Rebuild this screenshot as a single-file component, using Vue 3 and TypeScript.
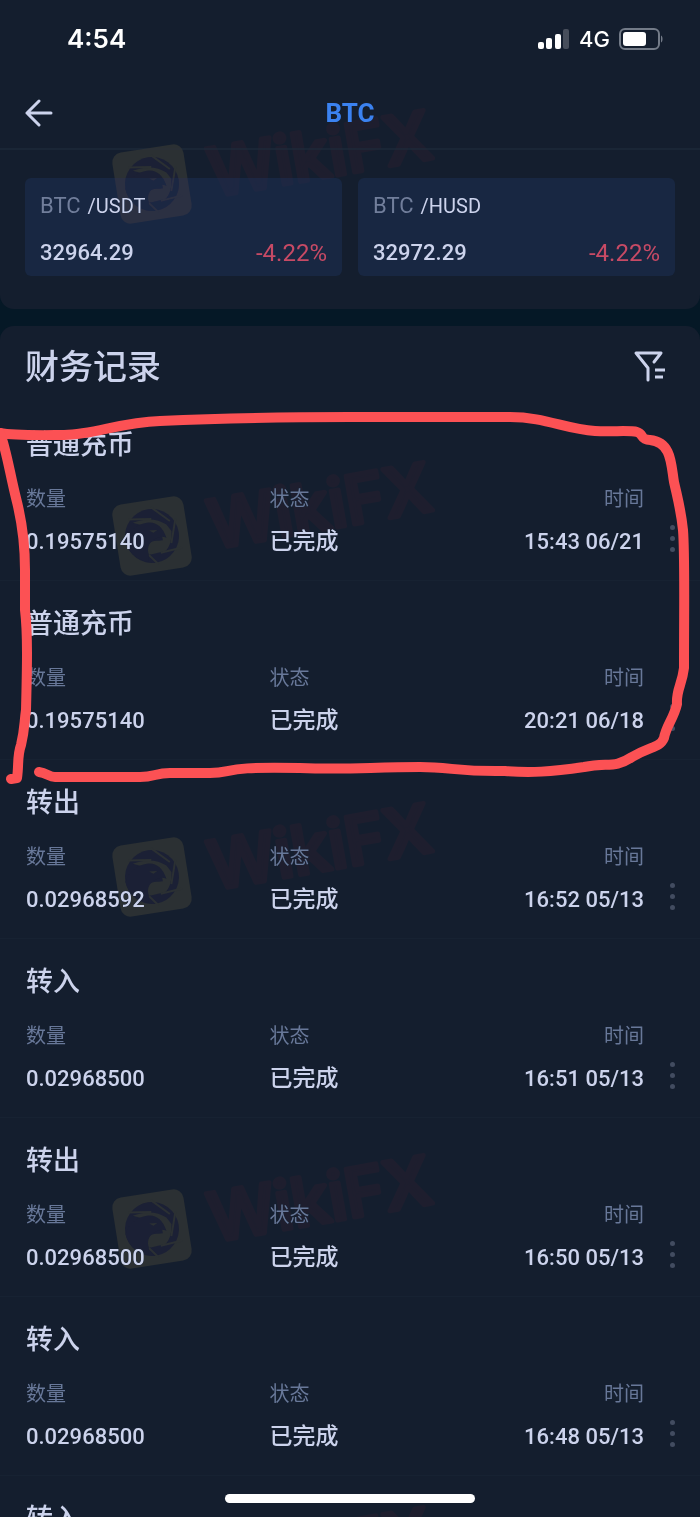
<script setup lang="ts">
interface Pair {
  base: string
  quote: string
  price: string
  change: string
}

interface FinanceRecord {
  id: number
  type: string
  amount: string
  status: string
  time: string
}

const pairs: Pair[] = [
  { base: 'BTC', quote: '/USDT', price: '32964.29', change: '-4.22%' },
  { base: 'BTC', quote: '/HUSD', price: '32972.29', change: '-4.22%' },
]

const records: FinanceRecord[] = [
  { id: 1, type: '普通充币', amount: '0.19575140', status: '已完成', time: '15:43 06/21' },
  { id: 2, type: '普通充币', amount: '0.19575140', status: '已完成', time: '20:21 06/18' },
  { id: 3, type: '转出', amount: '0.02968592', status: '已完成', time: '16:52 05/13' },
  { id: 4, type: '转入', amount: '0.02968500', status: '已完成', time: '16:51 05/13' },
  { id: 5, type: '转出', amount: '0.02968500', status: '已完成', time: '16:50 05/13' },
  { id: 6, type: '转入', amount: '0.02968500', status: '已完成', time: '16:48 05/13' },
]

const nextType = '转入'

// Vertical centres of the repeated brand mark
const marks: number[] = [184, 536, 877, 1229, 1581]
</script>

<template>
  <div class="screen">
    <section class="panel top-panel">
      <div class="status-bar">
        <span class="clock">4:54</span>
        <div class="indicators">
          <svg class="signal" width="32" height="20" viewBox="0 0 32 20" aria-hidden="true">
            <rect x="0" y="13" width="6" height="7" rx="2" fill="#fff" />
            <rect x="8" y="9" width="6" height="11" rx="2" fill="#fff" />
            <rect x="17" y="5" width="6" height="15" rx="2" fill="#fff" />
            <rect x="25" y="0" width="6" height="20" rx="2" fill="#474e5b" />
          </svg>
          <span class="network">4G</span>
          <svg class="battery" width="45" height="22" viewBox="0 0 45 22" aria-hidden="true">
            <rect x="1" y="1" width="39" height="20" rx="5" fill="none" stroke="#737b88" stroke-width="2" />
            <rect x="4" y="4" width="23" height="14" rx="3" fill="#fff" />
            <path d="M42 7.500c2 .8 2 6.200 0 7z" fill="#737b88" />
          </svg>
        </div>
      </div>

      <header class="nav">
        <button class="icon-button" type="button" aria-label="返回">
          <svg width="28" height="28" viewBox="0 0 28 28" fill="none" stroke="currentColor" stroke-width="3" stroke-linecap="round" stroke-linejoin="round">
            <path d="M14 2 2 14l12 12M2 14h24" />
          </svg>
        </button>
        <h1 class="coin">BTC</h1>
        <span></span>
      </header>

      <div class="pairs">
        <a v-for="pair in pairs" :key="pair.quote" class="pair" href="#">
          <span class="pair-name"><span class="base">{{ pair.base }}</span><span class="quote">{{ pair.quote }}</span></span>
          <span class="pair-price"><span>{{ pair.price }}</span><span class="change">{{ pair.change }}</span></span>
        </a>
      </div>
    </section>

    <section class="panel list-panel">
      <div class="list-head">
        <h2>财务记录</h2>
        <button class="icon-button" type="button" aria-label="筛选">
          <svg width="32" height="32" viewBox="0 0 32 32" fill="none" stroke="currentColor" stroke-width="3" stroke-linejoin="round">
            <path d="M20 11 27 2H2l12 15v12" stroke-linecap="round" />
            <path d="M21 19h10M21 26h8" />
          </svg>
        </button>
      </div>

      <article v-for="record in records" :key="record.id" class="record">
        <h3>{{ record.type }}</h3>
        <div class="record-body">
          <dl>
            <div><dt>数量</dt><dd>{{ record.amount }}</dd></div>
            <div><dt>状态</dt><dd class="status">{{ record.status }}</dd></div>
            <div class="time"><dt>时间</dt><dd>{{ record.time }}</dd></div>
          </dl>
          <button class="more" type="button" aria-label="更多"><i></i><i></i><i></i></button>
        </div>
      </article>
      <article class="record"><h3>{{ nextType }}</h3></article>
    </section>

    <svg class="overlay marks" viewBox="0 0 700 1517" preserveAspectRatio="xMinYMin slice" aria-hidden="true">
      <g v-for="y in marks" :key="y" :transform="`translate(152 ${y}) rotate(-9)`">
        <rect class="badge" x="-36" y="-36" width="72" height="72" rx="10" />
        <circle class="lens" r="27" />
        <path class="aperture" d="M-17-16C-5-19 8-17 16-9L20-2C19 6 17 12 11 17L-4 18C-10 17-9 10-6 8-2 4 5 6 10 6L10-4z" />
        <path class="blades" d="M-21-20 2-17M3-29 20-12M26-14 18 10M28 16 6 18M2 29-7 17" />
        <path class="eagle" d="M-27 1C-22-10-12-14-3-14 6-14 12-8 14 4 10 1 5 2 1 4-5 7-7 12-6 18L-8 25C-20 20-26 12-27 1z" />
        <path class="eye" d="M-2-6 6-5 2-3z" />
      </g>
      <text v-for="y in marks" :key="`t${y}`" class="brand" :transform="`translate(213 ${y + 13}) rotate(-10)`">WikiFX</text>
    </svg>

    <svg class="overlay scribble" viewBox="0 0 700 1517" preserveAspectRatio="xMinYMin slice" aria-hidden="true">
      <path d="M0 433C14 436 50 435 64 435 95 435 120 422 160 421 225 418 300 417 350 417H510C545 417 565 429 595 431 612 432 630 430 637 432 644 434 640 440 650 440 672 442 671 465 674 482 678 500 681 510 683 530 685 555 684 600 684 668 682 685 676 690 677 704 674 718 666 726 664 738 660 748 650 746 632 757 614 769 608 762 584 767 550 772 530 773 505 771 460 772 450 767 420 767 370 767 350 770 300 768 220 766 235 773 210 773H170C155 773 155 777 140 777H55C49 777 47 773 39 772" />
      <path d="M0 433C6 448 10 474 16 498 23 525 25 550 25 570V610C28 635 27 670 26 710 24 724 25 728 21 745 17 756 19 765 17 778L11 779" />
    </svg>

    <div class="home-indicator"></div>
  </div>
</template>

<style>
body {
  margin: 0;
  background: #051826;
}
</style>

<style scoped>
.screen {
  position: relative;
  display: flex;
  flex-direction: column;
  gap: 17px;
  height: 100vh;
  overflow: hidden;
  background: #051826;
  color: #ccd3ec;
  font-family: Roboto, "Noto Sans CJK SC", sans-serif;
  font-size: 22px;
}

h1,
h2,
h3,
dl,
dd {
  margin: 0;
}

button {
  padding: 0;
  border: 0;
  background: none;
  color: inherit;
}

.panel {
  background: #141e2e;
}

.top-panel {
  flex: none;
  padding-bottom: 33px;
  border-radius: 0 0 14px 14px;
}

.status-bar {
  display: flex;
  align-items: center;
  justify-content: space-between;
  height: 77px;
  padding: 0 36px 0 67px;
  color: #fff;
  font-family: Inter, sans-serif;
}

.clock {
  font-size: 26px;
  font-weight: 600;
}

.indicators {
  display: flex;
  align-items: center;
  gap: 9px;
}

.network {
  font-size: 22px;
  font-weight: 500;
}

.nav {
  display: grid;
  grid-template-columns: 1fr auto 1fr;
  align-items: center;
  height: 71px;
  padding: 0 25px;
  border-bottom: 2px solid #1a2636;
}

.icon-button {
  display: flex;
  justify-self: start;
}

.coin {
  color: #3b82f0;
  font-size: 26px;
  font-weight: 700;
  line-height: 32px;
}

.pairs {
  display: grid;
  grid-template-columns: 1fr 1fr;
  gap: 16px;
  padding: 28px 25px 0;
}

.pair {
  display: flex;
  flex-direction: column;
  gap: 17px;
  padding: 14px 15px 7px;
  border-radius: 6px;
  background: #182742;
  color: inherit;
  text-decoration: none;
}

.pair-name {
  display: flex;
  align-items: baseline;
  gap: 7px;
  line-height: 28px;
}

.base {
  color: #717e9b;
}

.quote {
  font-size: 20px;
}

.pair-price {
  display: flex;
  justify-content: space-between;
  font-weight: 500;
  line-height: 32px;
}

.change {
  color: #c74a65;
  font-size: 24px;
  font-weight: 400;
}

.list-panel {
  flex: 1;
  min-height: 0;
  overflow: hidden;
  border-radius: 14px 14px 0 0;
}

.list-head {
  display: flex;
  align-items: center;
  justify-content: space-between;
  padding: 21px 34px 15px 25px;
}

h2 {
  font-size: 34px;
  font-weight: 500;
  line-height: 40px;
}

.record {
  padding: 23px 12px 22px 26px;
  border-bottom: 1px solid #172232;
}

h3 {
  font-size: 27px;
  font-weight: 500;
  line-height: 40px;
}

.record-body {
  display: flex;
  align-items: flex-end;
  gap: 12px;
  padding-top: 20px;
}

dl {
  display: grid;
  flex: 1;
  grid-template-columns: 13fr 8fr 12fr;
}

dt {
  margin-bottom: 13px;
  color: #687899;
  font-size: 20px;
  line-height: 28px;
}

dd {
  font-weight: 500;
  line-height: 32px;
  white-space: nowrap;
}

.status {
  font-size: 23px;
}

.time {
  text-align: right;
}

.more {
  display: flex;
  flex-direction: column;
  align-items: center;
  justify-content: center;
  gap: 6px;
  width: 32px;
  height: 40px;
}

.more i {
  width: 5px;
  height: 5px;
  border-radius: 50%;
  background: #424c60;
}

.overlay {
  position: absolute;
  top: 0;
  left: 0;
  width: 100%;
  height: 100%;
  pointer-events: none;
}

.marks {
  mix-blend-mode: lighten;
}

.badge,
.aperture,
.eye {
  fill: #2b3033;
}

.lens,
.eagle {
  fill: #1b2035;
}

.blades {
  fill: none;
  stroke: #2b3033;
  stroke-width: 2;
}

.brand {
  fill: #1e1d2c;
  stroke: #1e1d2c;
  stroke-width: 5;
  stroke-linejoin: round;
  font-family: Inter, sans-serif;
  font-size: 67px;
  font-weight: 500;
}

.scribble {
  fill: none;
  stroke: #fc5154;
  stroke-width: 10;
  stroke-linecap: round;
  stroke-linejoin: round;
}

.home-indicator {
  position: absolute;
  bottom: 14px;
  left: 50%;
  width: 250px;
  height: 9px;
  margin-left: -125px;
  border-radius: 5px;
  background: #fff;
}
</style>
